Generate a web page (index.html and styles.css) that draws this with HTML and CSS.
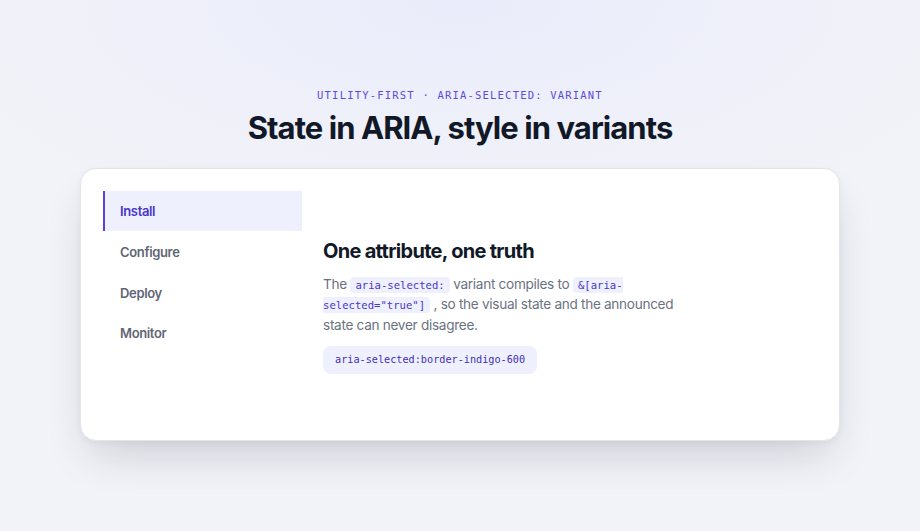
FILE: index.html
```html
<!DOCTYPE html>
<html lang="en">
<head>
<meta charset="utf-8">
<title>State in ARIA, style in variants</title>
<link rel="stylesheet" href="styles.css">
</head>
<body>
  <main class="page">
    <header class="intro">
      <p class="eyebrow">Utility-first · aria-selected: variant</p>
      <h1 class="title">State in ARIA, style in variants</h1>
    </header>

    <section class="card">
      <nav class="tabs" role="tablist" aria-orientation="vertical">
        <button class="tab" role="tab" aria-selected="true">Install</button>
        <button class="tab" role="tab" aria-selected="false">Configure</button>
        <button class="tab" role="tab" aria-selected="false">Deploy</button>
        <button class="tab" role="tab" aria-selected="false">Monitor</button>
      </nav>

      <div class="panel" role="tabpanel">
        <div class="panel-body">
          <h2 class="panel-title">One attribute, one truth</h2>
          <p class="panel-text">The <code class="chip">aria-selected:</code> variant compiles to <code class="chip">&amp;[aria-selected="true"]</code> , so the visual state and the announced state can never disagree.</p>
          <pre class="snippet"><code>aria-selected:border-indigo-600</code></pre>
        </div>
      </div>
    </section>
  </main>
</body>
</html>
```

FILE: styles.css
```css
* {
  box-sizing: border-box;
}

html,
body {
  margin: 0;
  height: 100%;
}

body {
  font-family: Inter, "Noto Sans", sans-serif;
  color: #111827;
  background:
    radial-gradient(ellipse 60% 45% at 50% 0%, #eaecfb 0%, rgba(234, 236, 251, 0) 100%),
    #f2f3f8;
}

.page {
  display: flex;
  flex-direction: column;
  align-items: center;
  padding-top: 88px;
}

.intro {
  text-align: center;
}

.eyebrow {
  margin: 0;
  font-family: "DejaVu Sans Mono", "Liberation Mono", monospace;
  font-size: 10.5px;
  line-height: 14px;
  letter-spacing: 1.2px;
  text-transform: uppercase;
  color: #5b4bde;
}

.title {
  margin: 6px 0 0;
  font-size: 31px;
  line-height: 40px;
  font-weight: 700;
  letter-spacing: -0.03em;
  color: #111827;
}

.card {
  margin-top: 20px;
  width: 760px;
  min-height: 273px;
  display: flex;
  gap: 21px;
  padding: 22px;
  background: #fff;
  border: 1px solid #e3e5ec;
  border-radius: 16px;
  box-shadow: 0 22px 45px -12px rgba(30, 36, 60, 0.2), 0 2px 6px rgba(30, 36, 60, 0.04);
}

.tabs {
  width: 199px;
  flex: none;
  display: flex;
  flex-direction: column;
  gap: 0.8px;
}

.tab {
  display: block;
  width: 100%;
  height: 40px;
  padding: 0 0 0 15px;
  text-align: left;
  font-family: Inter, "Noto Sans", sans-serif;
  font-size: 13px;
  font-weight: 600;
  letter-spacing: -0.35px;
  color: #5f6675;
  background: transparent;
  border: 0;
  border-left: 2px solid transparent;
  cursor: pointer;
}

.tab[aria-selected="true"] {
  color: #4a36c9;
  background: #eff0fd;
  border-left-color: #5b3fe0;
}

.panel {
  flex: 1;
  display: flex;
  align-items: center;
}

.panel-body {
  max-width: 360px;
  padding-top: 2px;
}

.panel-title {
  margin: 0;
  font-size: 20px;
  line-height: 28px;
  font-weight: 700;
  letter-spacing: -0.035em;
  color: #111827;
}

.panel-text {
  margin: 9px 0 0;
  font-size: 13.6px;
  line-height: 20.4px;
  letter-spacing: -0.3px;
  color: #6b7280;
}

.chip {
  font-family: "DejaVu Sans Mono", "Liberation Mono", monospace;
  font-size: 10.6px;
  line-height: 1;
  letter-spacing: 0;
  color: #4a36c9;
  background: #eff0fd;
  padding: 2px 5px;
  border-radius: 4px;
}

.snippet {
  display: inline-block;
  margin: 11px 0 0;
  padding: 0 12px;
  height: 28px;
  line-height: 28px;
  font-family: "DejaVu Sans Mono", "Liberation Mono", monospace;
  font-size: 10.2px;
  color: #3f2fb8;
  background: #eff0fd;
  border-radius: 8px;
}
```
